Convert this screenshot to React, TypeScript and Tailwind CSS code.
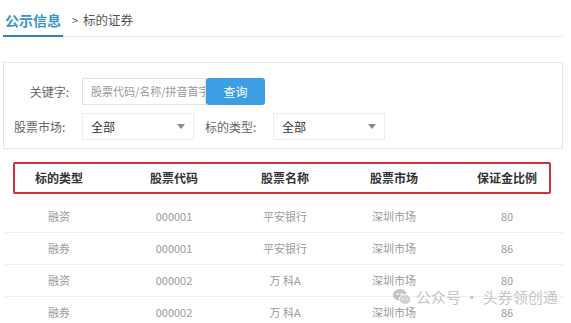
import React from 'react';

const font = { fontFamily: '"Noto Sans CJK SC", "Noto Sans", sans-serif' };

const rows = [
    ['融资', '000001', '平安银行', '深圳市场', '80'],
    ['融券', '000001', '平安银行', '深圳市场', '86'],
    ['融资', '000002', '万 科A', '深圳市场', '80'],
    ['融券', '000002', '万 科A', '深圳市场', '86'],
];

// shared column template, starts at x = 2
const cols = 'grid grid-cols-[114px_116px_106px_112px_114px]';

const Caret = () => (
    <svg width="8" height="5" viewBox="0 0 8 5" className="ml-auto">
        <path d="M0 0 L8 0 L4 5 Z" fill="#8a8a8a" />
    </svg>
);

export default function App() {
    return (
        <div className="relative w-[571px] h-[323px] overflow-hidden bg-white" style={font}>
            {/* Breadcrumb */}
            <div className="mx-[3px] w-[560px] h-[37px] flex items-end border-b border-[#e8e8e8]">
                <div className="h-full flex items-center pt-[4px] px-[2px] border-b-2 border-[#2f86b8] -mb-px">
                    <span className="text-[14px] font-bold text-[#3a93c8]">公示信息</span>
                </div>
                <div className="h-full flex items-center pt-[4px] ml-[9px] text-[12.5px] text-[#555]">
                    <span className="text-[11px] mr-[5px]">&gt;</span>标的证券
                </div>
            </div>

            {/* Filter panel */}
            <div className="mt-[25px] mx-[3px] w-[560px] h-[87px] border border-[#e6e6e6] flex flex-col pt-[15px] gap-[8px]">
                <div className="flex items-center h-[27px]">
                    <div className="w-[66px] text-right text-[12px] text-[#666] pr-[1px]">关键字:</div>
                    <div className="ml-[12px] w-[124px] h-[27px] border border-[#e3e3e3] flex items-center pl-[8px] overflow-hidden whitespace-nowrap text-[11px] text-[#9a9a9a]">
                        股票代码/名称/拼音首字母
                    </div>
                    <div className="w-[59px] h-[27px] rounded-[3px] bg-[#3d9de3] flex items-center justify-center text-[12px] text-white">
                        查询
                    </div>
                </div>
                <div className="flex items-center h-[27px]">
                    <div className="w-[75px] pl-[10px] text-[12px] text-[#666] whitespace-nowrap">股票市场:</div>
                    <div className="ml-[3px] w-[112px] h-[27px] border border-[#ececec] flex items-center pl-[8px] pr-[8px] text-[12px] text-[#333]">
                        全部
                        <Caret />
                    </div>
                    <div className="ml-[11px] w-[62px] text-[12px] text-[#666] whitespace-nowrap">标的类型:</div>
                    <div className="ml-[6px] w-[112px] h-[27px] border border-[#ececec] flex items-center pl-[8px] pr-[8px] text-[12px] text-[#333]">
                        全部
                        <Caret />
                    </div>
                </div>
            </div>

            {/* Table header */}
            <div className="mt-[13px] ml-[13px] w-[538px] h-[32px] border-2 border-[#c9333a] rounded-[2px] overflow-hidden flex items-center">
                <div className={`${cols} -ml-[13px] shrink-0 text-[12px] font-bold text-[#333]`}>
                    <div className="text-center">标的类型</div>
                    <div className="text-center">股票代码</div>
                    <div className="text-center">股票名称</div>
                    <div className="text-center">股票市场</div>
                    <div className="text-center">保证金比例</div>
                </div>
            </div>

            {/* Rows */}
            <div className="mt-[7px] mx-[5px] w-[558px]">
                {rows.map((r, i) => (
                    <div key={i} className="h-[32px] flex items-center border-b border-[#efefef]">
                        <div className={`${cols} -ml-[3px] shrink-0 text-[11px] text-[#9a9a9a]`}>
                            {r.map((c, j) => (
                                <div key={j} className="text-center">{c}</div>
                            ))}
                        </div>
                    </div>
                ))}
            </div>

            {/* Watermark */}
            <div className="absolute left-[392px] top-[286px] flex items-center gap-[4px] opacity-80">
                <svg width="20" height="20" viewBox="0 0 20 20">
                    <ellipse cx="8" cy="8" rx="7" ry="6" fill="#b5b5b5" />
                    <ellipse cx="13" cy="12.5" rx="6" ry="5" fill="#c8c8c8" stroke="#fff" strokeWidth="1" />
                    <circle cx="5.5" cy="7" r="1" fill="#fff" />
                    <circle cx="9.5" cy="7" r="1" fill="#fff" />
                    <circle cx="11" cy="12" r="0.8" fill="#fff" />
                    <circle cx="15" cy="12" r="0.8" fill="#fff" />
                </svg>
                <span className="text-[15px] text-[#b8b8b8] whitespace-nowrap">公众号 · 头券领创通</span>
            </div>
        </div>
    );
}
